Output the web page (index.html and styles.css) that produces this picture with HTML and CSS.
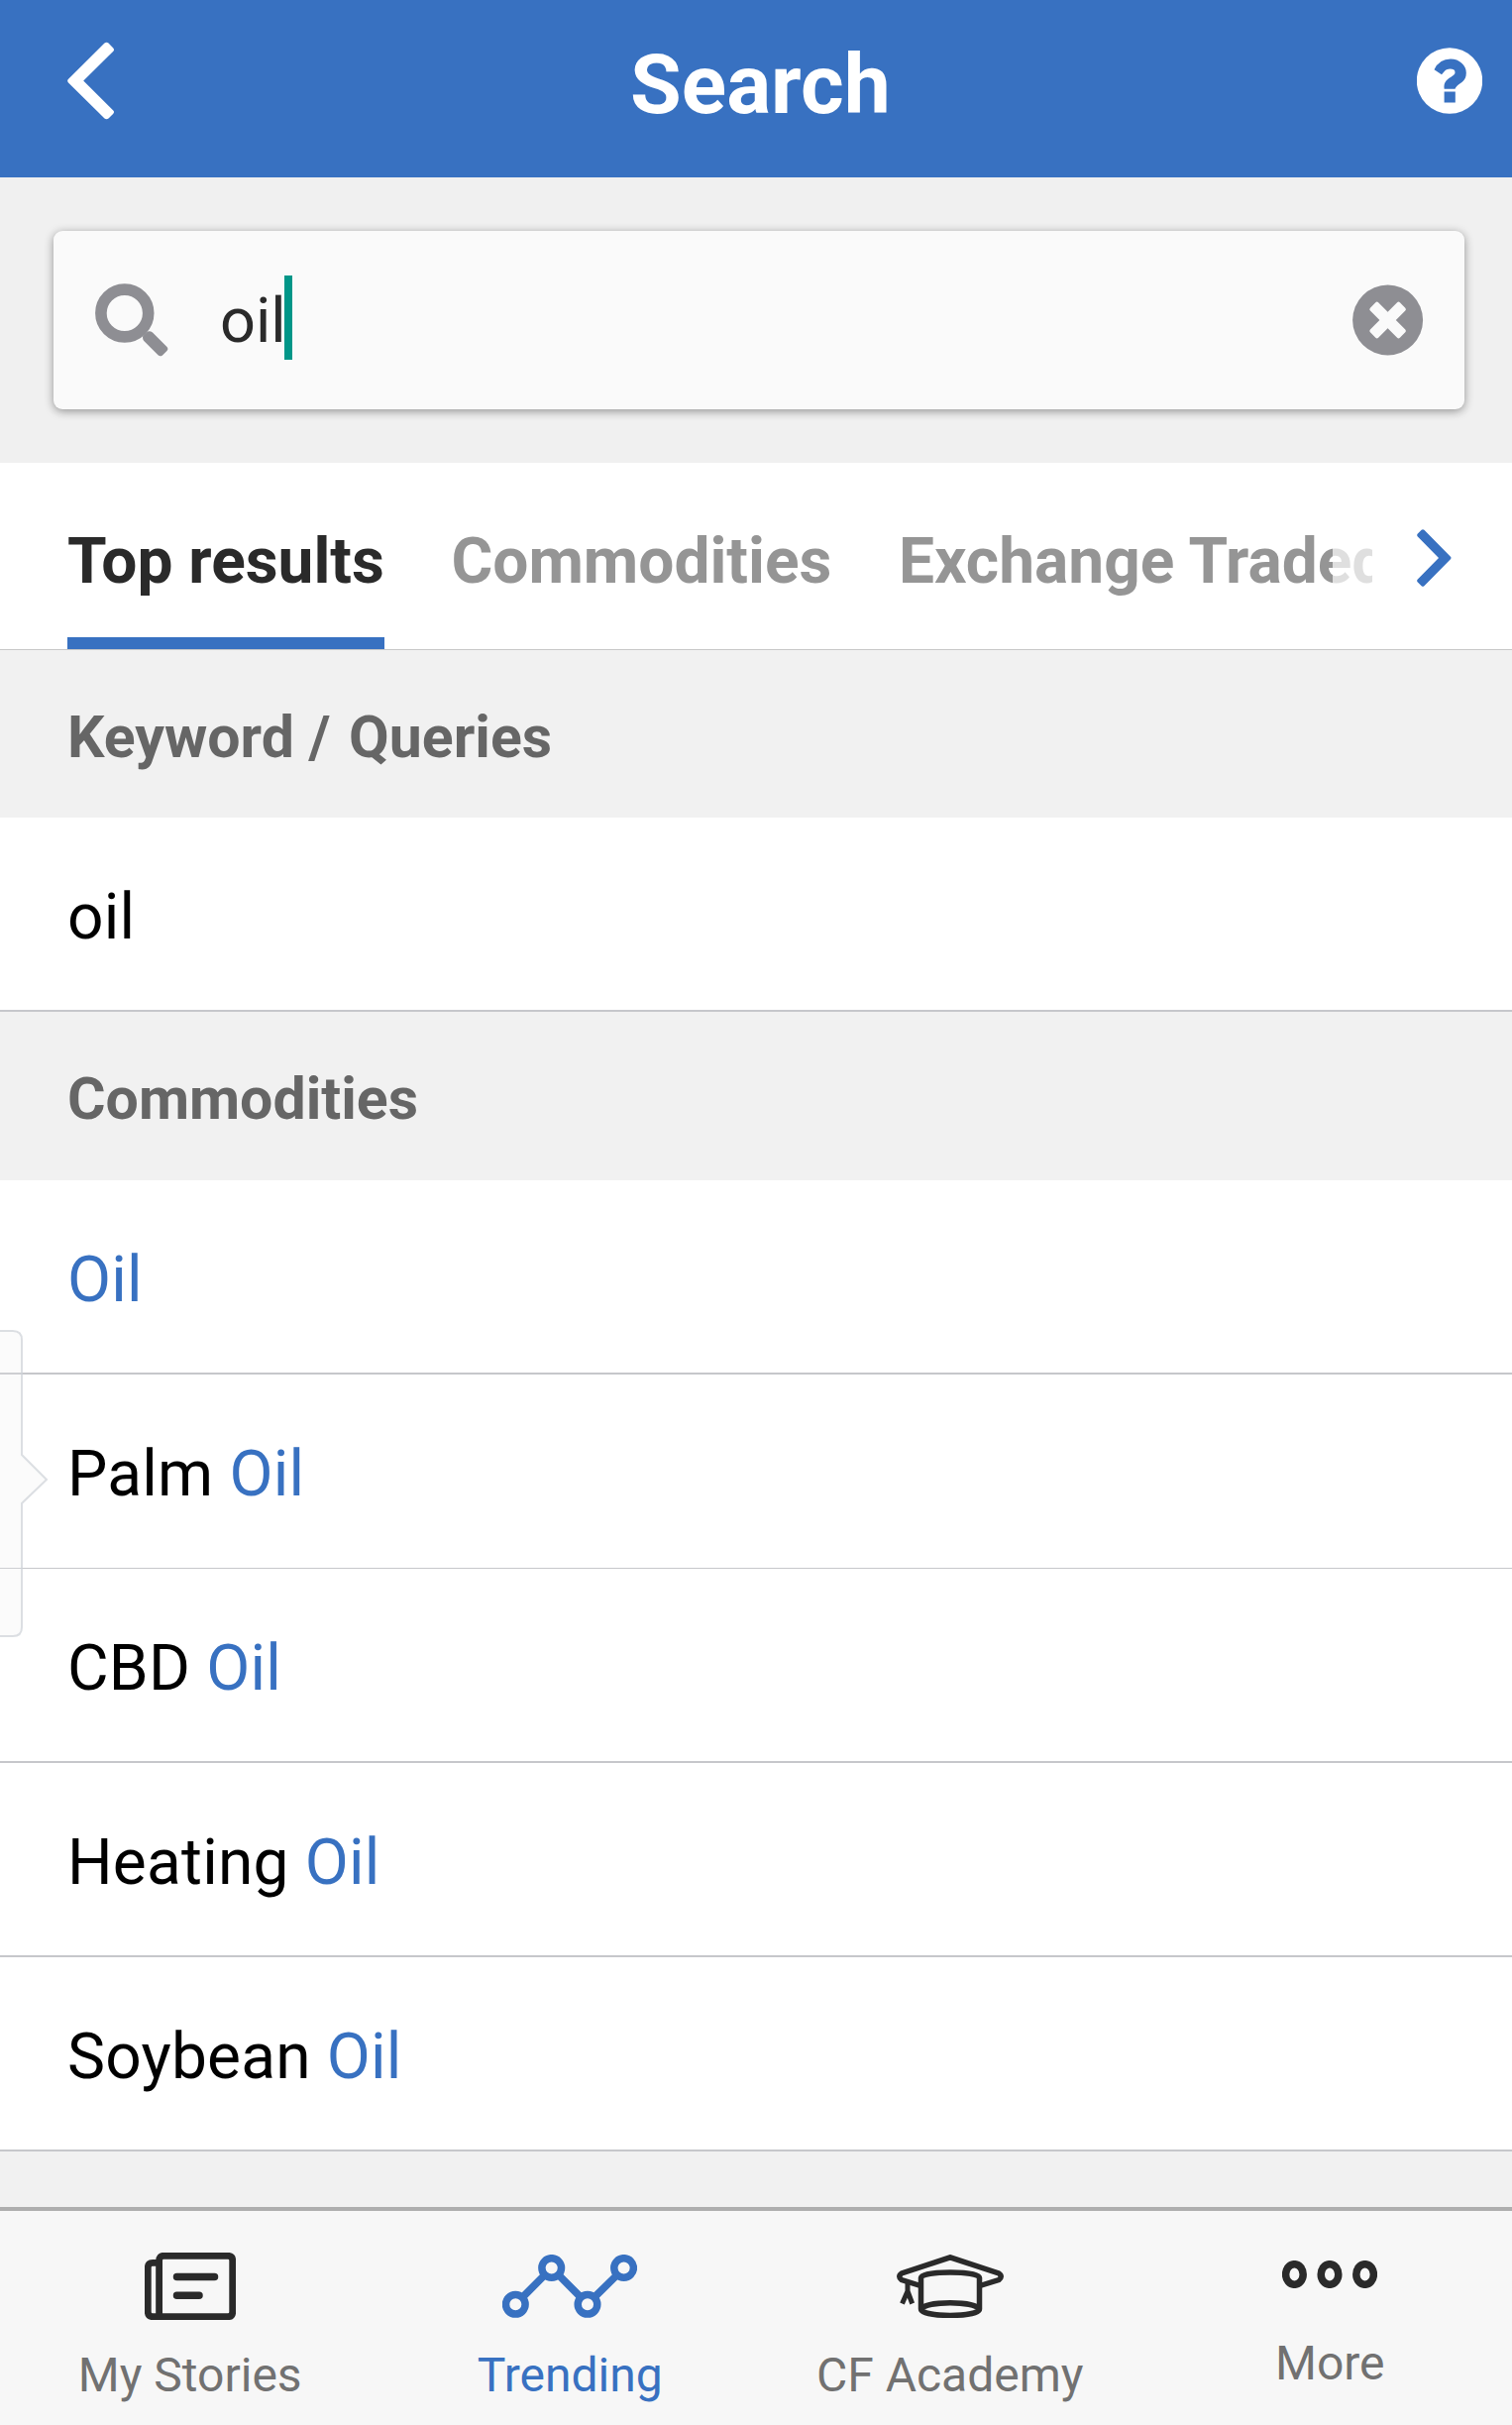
FILE: index.html
```html
<!DOCTYPE html>
<html lang="en">
<head>
  <meta charset="UTF-8">
  <meta name="viewport" content="width=device-width, initial-scale=1.0">
  <title>Search</title>
  <link rel="stylesheet" href="styles.css">
</head>
<body>
  <div class="app">
    <header class="header">
      <svg class="back" width="48" height="80" viewBox="0 0 48 80">
        <path d="M0.800 39 L37.500 2.600 Q39.500 1 41.500 2.600 L46.300 7.400 Q47.800 9.200 46.300 10.800 L16.200 40.500 L46.300 70.400 Q47.800 72 46.300 73.800 L41.500 78.400 Q39.500 80 37.500 78.400 L0.800 42.200 Q-0.500 40.600 0.800 39 Z" fill="#fff"/>
      </svg>
      <h1 class="title">Search</h1>
      <svg class="help" width="66" height="67" viewBox="0 0 66 67">
        <circle cx="33" cy="33.500" r="33.200" fill="#fff"/>
        <path d="M17.500 22.300 Q22.500 11.600 34 11.600 C43 11.600 49.800 18 49.800 25.400 C49.800 34 44 35.500 41 38.200 Q38.700 40.300 38.500 41.700 H27.600 C27 35.500 29.500 33 33 30.600 C36 28.600 38.500 27.500 38.500 25 C38.500 22.500 36.500 21.600 33.500 21.600 C29 21.600 27.500 24.500 25 27.300 Z M27.600 44.500 H38.800 V55.500 H27.600 Z" fill="#3871c1"/>
      </svg>
    </header>

    <div class="search">
      <div class="search-box">
        <svg class="search-icon" width="74" height="74" viewBox="0 0 74 74">
          <circle cx="29.800" cy="30" r="23.900" fill="none" stroke="#8e8e93" stroke-width="11.600"/>
          <path d="M53 48.500 Q55.500 47.500 58 49.600 L72 63.500 Q74.500 65.700 72.500 68 L68 72.500 Q65.700 74.300 63.500 72.300 L49 57.800 Q47.600 55.500 48.200 53 Z" fill="#8e8e93"/>
        </svg>
        <span class="query">oil</span>
        <span class="caret"></span>
        <svg class="clear" width="72" height="72" viewBox="0 0 72 72">
          <circle cx="35.600" cy="36" r="35.500" fill="#8e8e93"/>
          <g transform="rotate(45 35.600 36)" fill="#fafafa">
            <rect x="14.400" y="30.200" width="42.400" height="11.600" rx="2"/>
            <rect x="29.800" y="14.800" width="11.600" height="42.400" rx="2"/>
          </g>
        </svg>
      </div>
    </div>

    <nav class="tabs">
      <div class="tab-list">
        <span class="tab active">Top results</span>
        <span class="tab">Commodities</span>
        <span class="tab">Exchange Traded</span>
        <span class="fade"></span>
      </div>
      <svg class="next" width="36" height="58" viewBox="0 0 36 58">
        <path d="M0.600 4.700 L4.600 0.700 Q6 -0.400 7.400 0.700 L34 27.800 Q35 29 34 30.200 L7.400 57.300 Q6 58.400 4.600 57.300 L0.600 53.300 Q-0.300 52 0.600 50.800 L22 29 L0.600 7.200 Q-0.300 6 0.600 4.700 Z" fill="#3871c1"/>
      </svg>
    </nav>

    <main class="results">
      <h2 class="section">Keyword <span class="slash">/</span> Queries</h2>
      <div class="row">oil</div>
      <h2 class="section">Commodities</h2>
      <div class="row"><em>Oil</em></div>
      <div class="row thin">Palm <em>Oil</em></div>
      <div class="row">CBD <em>Oil</em></div>
      <div class="row">Heating <em>Oil</em></div>
      <div class="row">Soybean <em>Oil</em></div>
    </main>

    <footer class="tabbar">
      <div class="item">
        <svg width="92" height="68" viewBox="0 0 92 68" fill="none" stroke="#2a2a2a" stroke-width="6.800">
          <path d="M14.600 65 V8 Q14.600 3.300 19 3.300 H84 Q88.700 3.300 88.700 8 V60 Q88.700 64.700 84 64.700 H8 Q3.300 64.700 3.300 60 V15 Q3.300 10.300 8 10.300 H14"/>
          <path d="M32.500 24.500 H70.500 M32.500 43.300 H55" stroke-width="7.500" stroke-linecap="round"/>
        </svg>
        <span>My Stories</span>
      </div>
      <div class="item selected">
        <svg width="136" height="64" viewBox="0 0 136 64" fill="none" stroke="#3871c1" stroke-width="7.500">
          <circle cx="13.300" cy="50.300" r="9.800"/>
          <circle cx="49.700" cy="13.500" r="9.800"/>
          <circle cx="86" cy="50.300" r="9.800"/>
          <circle cx="122.600" cy="13.500" r="9.800"/>
          <path d="M20.500 43 L42.500 20.800 M57 20.800 L79 43 M93 43 L115.500 20.800"/>
        </svg>
        <span>Trending</span>
      </div>
      <div class="item">
        <svg width="108" height="64" viewBox="0 0 108 64" fill="none" stroke="#2a2a2a" stroke-width="5.500">
          <path d="M24 31.500 L5 25.500 Q0.500 22 5 19 L54 2.800 L103 19 Q107.500 22 103 25.500 L84 31.500"/>
          <path d="M24.500 55 V23.500 C25 16 83 16 83.500 23.500 V55 C83.500 63.500 24.500 63.500 24.500 55 C30 46.500 78 46.500 83.500 55"/>
          <path d="M11 28 V39 M11 37 L5.500 49.500 M11 37 L15.700 49.500" stroke-width="5"/>
        </svg>
        <span>CF Academy</span>
      </div>
      <div class="item more">
        <svg width="96" height="28" viewBox="0 0 96 28" fill="none" stroke="#2a2a2a" stroke-width="7.500">
          <ellipse cx="12.400" cy="14" rx="8.800" ry="10.300"/>
          <ellipse cx="48" cy="14" rx="8.800" ry="10.300"/>
          <ellipse cx="83.600" cy="14" rx="8.800" ry="10.300"/>
        </svg>
        <span>More</span>
      </div>
    </footer>

    <!-- drawer handle on the left edge -->
    <svg class="handle" width="49" height="310" viewBox="0 0 49 310">
      <path d="M-2 1 H13 Q22 1 22 10 V126 L47 151 L22 175 V300 Q22 309 13 309 H-2 Z" fill="rgba(235,235,235,0.22)" stroke="rgba(205,210,215,0.7)" stroke-width="2"/>
    </svg>
  </div>
</body>
</html>
```
FILE: styles.css
```css
* {
  box-sizing: border-box;
}
body {
  margin: 0;
  font-family: Roboto, sans-serif;
  background: #f1f1f1;
}
svg {
  display: block;
  flex: none;
}
.app {
  position: relative;
  display: flex;
  flex-direction: column;
  width: 1526px;
  height: 2447px;
  overflow: hidden;
}
.header {
  display: flex;
  align-items: center;
  justify-content: space-between;
  height: 179px;
  padding: 0 30px 17px 68px;
  background: #3871c1;
}
.title {
  margin: 0;
  padding: 9px 11px 0 0;
  font-size: 84px;
  line-height: 98px;
  font-weight: bold;
  color: #fff;
}
.search {
  height: 288px;
  padding: 54px 48px 54px 54px;
  background: #f0f0f0;
}
.search-box {
  display: flex;
  align-items: center;
  height: 180px;
  padding: 0 41px 0 42px;
  background: #fafafa;
  border-radius: 9px;
  box-shadow: 0 2px 10px rgba(0, 0, 0, 0.4);
}
.query {
  margin: 2px -2px 0 52px;
  font-size: 63px;
  line-height: 74px;
  color: #2a2a2a;
}
.caret {
  width: 8px;
  height: 85px;
  margin-top: -5px;
  background: #009688;
}
.clear {
  margin-left: auto;
}
.tabs {
  display: flex;
  height: 189px;
  background: #fff;
  border-bottom: 1px solid #c8c8c8;
}
.tab-list {
  position: relative;
  display: flex;
  gap: 67.500px;
  width: 1385px;
  padding-left: 68px;
  overflow: hidden;
}
.tab {
  height: 188px;
  padding-top: 62px;
  font-size: 64px;
  line-height: 75px;
  font-weight: bold;
  white-space: nowrap;
  color: #959595;
}
.tab.active {
  color: #2a2a2a;
  border-bottom: 12px solid #3871c1;
}
.fade {
  position: absolute;
  top: 0;
  right: 0;
  width: 40px;
  height: 188px;
  background: rgba(255, 255, 255, 0.7);
}
.next {
  margin: 67px 0 0 45px;
}
.section {
  height: 170px;
  margin: 0;
  padding: 53px 68px 0;
  font-size: 59px;
  line-height: 70px;
  font-weight: bold;
  color: #666;
  background: #f1f1f1;
}
.section:first-child {
  height: 169px;
}
.slash {
  margin-right: 4px;
}
.row {
  height: 196px;
  padding: 63px 68px 0;
  font-size: 64px;
  line-height: 75px;
  letter-spacing: 0.2px;
  color: #000;
  background: #fff;
  border-bottom: 2px solid #c6c7cb;
}
.row.thin {
  border-bottom-width: 1px;
}
.row em {
  font-style: normal;
  color: #3871c1;
}
.tabbar {
  display: flex;
  height: 220px;
  margin-top: auto;
  background: #f7f7f7;
  border-top: 4px solid #aeaeae;
}
.item {
  display: flex;
  flex-direction: column;
  align-items: center;
  justify-content: space-between;
  flex: 0 0 383.500px;
  padding: 42px 0 20px;
  font-size: 48px;
  line-height: 60px;
  color: #717171;
}
.item.selected {
  color: #3871c1;
}
.item.selected svg,
.item:nth-child(3) svg {
  margin-top: 2px;
}
.item.more {
  padding: 50px 0 32px;
}
.handle {
  position: absolute;
  left: 0;
  top: 1342px;
}
```
